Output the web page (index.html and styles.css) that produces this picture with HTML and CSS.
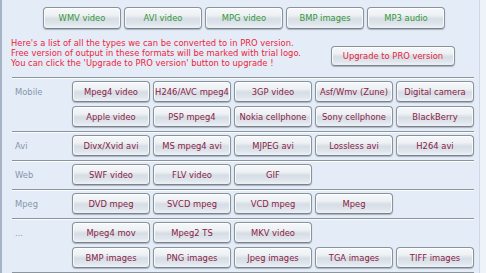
FILE: index.html
```html
<!DOCTYPE html>
<html>
<head>
<meta charset="utf-8">
<link rel="stylesheet" href="styles.css">
</head>
<body>
<div class="window">
  <div class="content">
    <div class="toprow">
      <span class="btn green">WMV video</span>
      <span class="btn green">AVI video</span>
      <span class="btn green">MPG video</span>
      <span class="btn green">BMP images</span>
      <span class="btn green">MP3 audio</span>
    </div>
    <div class="info">
      <div class="note">
        <div>Here's a list of all the types we can be converted to in PRO version.</div>
        <div>Free version of output in these formats will be marked with trial logo.</div>
        <div>You can click the 'Upgrade to PRO version' button to upgrade !</div>
      </div>
      <span class="btn upgrade">Upgrade to PRO version</span>
    </div>
    <div class="sections">
      <div class="section">
        <div class="label">Mobile</div>
        <div class="grid">
          <span class="btn">Mpeg4 video</span>
          <span class="btn">H246/AVC mpeg4</span>
          <span class="btn">3GP video</span>
          <span class="btn">Asf/Wmv (Zune)</span>
          <span class="btn">Digital camera</span>
          <span class="btn">Apple video</span>
          <span class="btn">PSP mpeg4</span>
          <span class="btn">Nokia cellphone</span>
          <span class="btn">Sony cellphone</span>
          <span class="btn">BlackBerry</span>
        </div>
      </div>
      <div class="section">
        <div class="label">Avi</div>
        <div class="grid">
          <span class="btn">Divx/Xvid avi</span>
          <span class="btn">MS mpeg4 avi</span>
          <span class="btn">MJPEG avi</span>
          <span class="btn">Lossless avi</span>
          <span class="btn">H264 avi</span>
        </div>
      </div>
      <div class="section">
        <div class="label">Web</div>
        <div class="grid">
          <span class="btn">SWF video</span>
          <span class="btn">FLV video</span>
          <span class="btn">GIF</span>
        </div>
      </div>
      <div class="section">
        <div class="label">Mpeg</div>
        <div class="grid">
          <span class="btn">DVD mpeg</span>
          <span class="btn">SVCD mpeg</span>
          <span class="btn">VCD mpeg</span>
          <span class="btn">Mpeg</span>
        </div>
      </div>
      <div class="section last">
        <div class="label">...</div>
        <div class="grid">
          <span class="btn">Mpeg4 mov</span>
          <span class="btn">Mpeg2 TS</span>
          <span class="btn">MKV video</span>
          <span class="gap"></span>
          <span class="gap"></span>
          <span class="btn">BMP images</span>
          <span class="btn">PNG images</span>
          <span class="btn">Jpeg images</span>
          <span class="btn">TGA images</span>
          <span class="btn">TIFF images</span>
        </div>
      </div>
    </div>
  </div>
  <div class="scrollbar"></div>
</div>
</body>
</html>
```

FILE: styles.css
```css
html, body {
  margin: 0;
  padding: 0;
}
body {
  width: 486px;
  height: 273px;
  overflow: hidden;
  font-family: "DejaVu Sans", Verdana, sans-serif;
  font-size: 8.4px;
  background: #e4ecf7;
}
.window {
  display: flex;
  width: 486px;
  height: 273px;
  border-left: 2px solid #a6b3c4;
  box-sizing: border-box;
  background: #e4ecf7;
}
.content {
  flex: 1;
  min-width: 0;
}
.scrollbar {
  width: 6px;
  background: #eef3fa;
  border-left: 1px solid #cfd9e6;
}
.btn {
  display: flex;
  align-items: center;
  justify-content: center;
  box-sizing: border-box;
  width: 78px;
  height: 21px;
  border: 1px solid #8a929b;
  border-bottom-color: #7a838d;
  border-radius: 4px;
  background: linear-gradient(#f6f8fa 0%, #eef2f5 35%, #d6dde5 55%, #dfe5ec 80%, #eef2f6 100%);
  box-shadow: inset 0 1px 0 #ffffff, inset 1px 0 0 #f7f9fb, inset -1px 0 0 #f7f9fb, 0 1px 1px rgba(60, 70, 80, 0.35);
  color: #8a2244;
  white-space: nowrap;
}
.btn.green {
  color: #35963a;
  height: 22px;
}
.btn.upgrade {
  width: 124px;
  height: 20px;
  color: #e41e3c;
  align-self: flex-end;
  margin-bottom: 2px;
}
.toprow {
  display: flex;
  gap: 3px;
  padding: 7px 0 0 41px;
}
.info {
  display: flex;
  justify-content: space-between;
  padding: 0 24px 0 9px;
  margin-top: 9px;
}
.note {
  color: #ee1c3a;
  line-height: 10px;
}
.sections {
  margin: 9px 5px 0 10px;
}
.section {
  display: flex;
  border-top: 1px solid #8c949e;
  box-shadow: inset 0 1px 0 #fafcfe;
  padding: 3px 0 4px 0;
}
.section.last {
  border-bottom: 1px solid #8c949e;
}
.label {
  width: 61px;
  box-sizing: border-box;
  padding-left: 3px;
  height: 21px;
  display: flex;
  align-items: center;
  color: #8795aa;
}
.grid {
  display: grid;
  grid-template-columns: repeat(5, 78px);
  column-gap: 3px;
  row-gap: 4px;
}
```
